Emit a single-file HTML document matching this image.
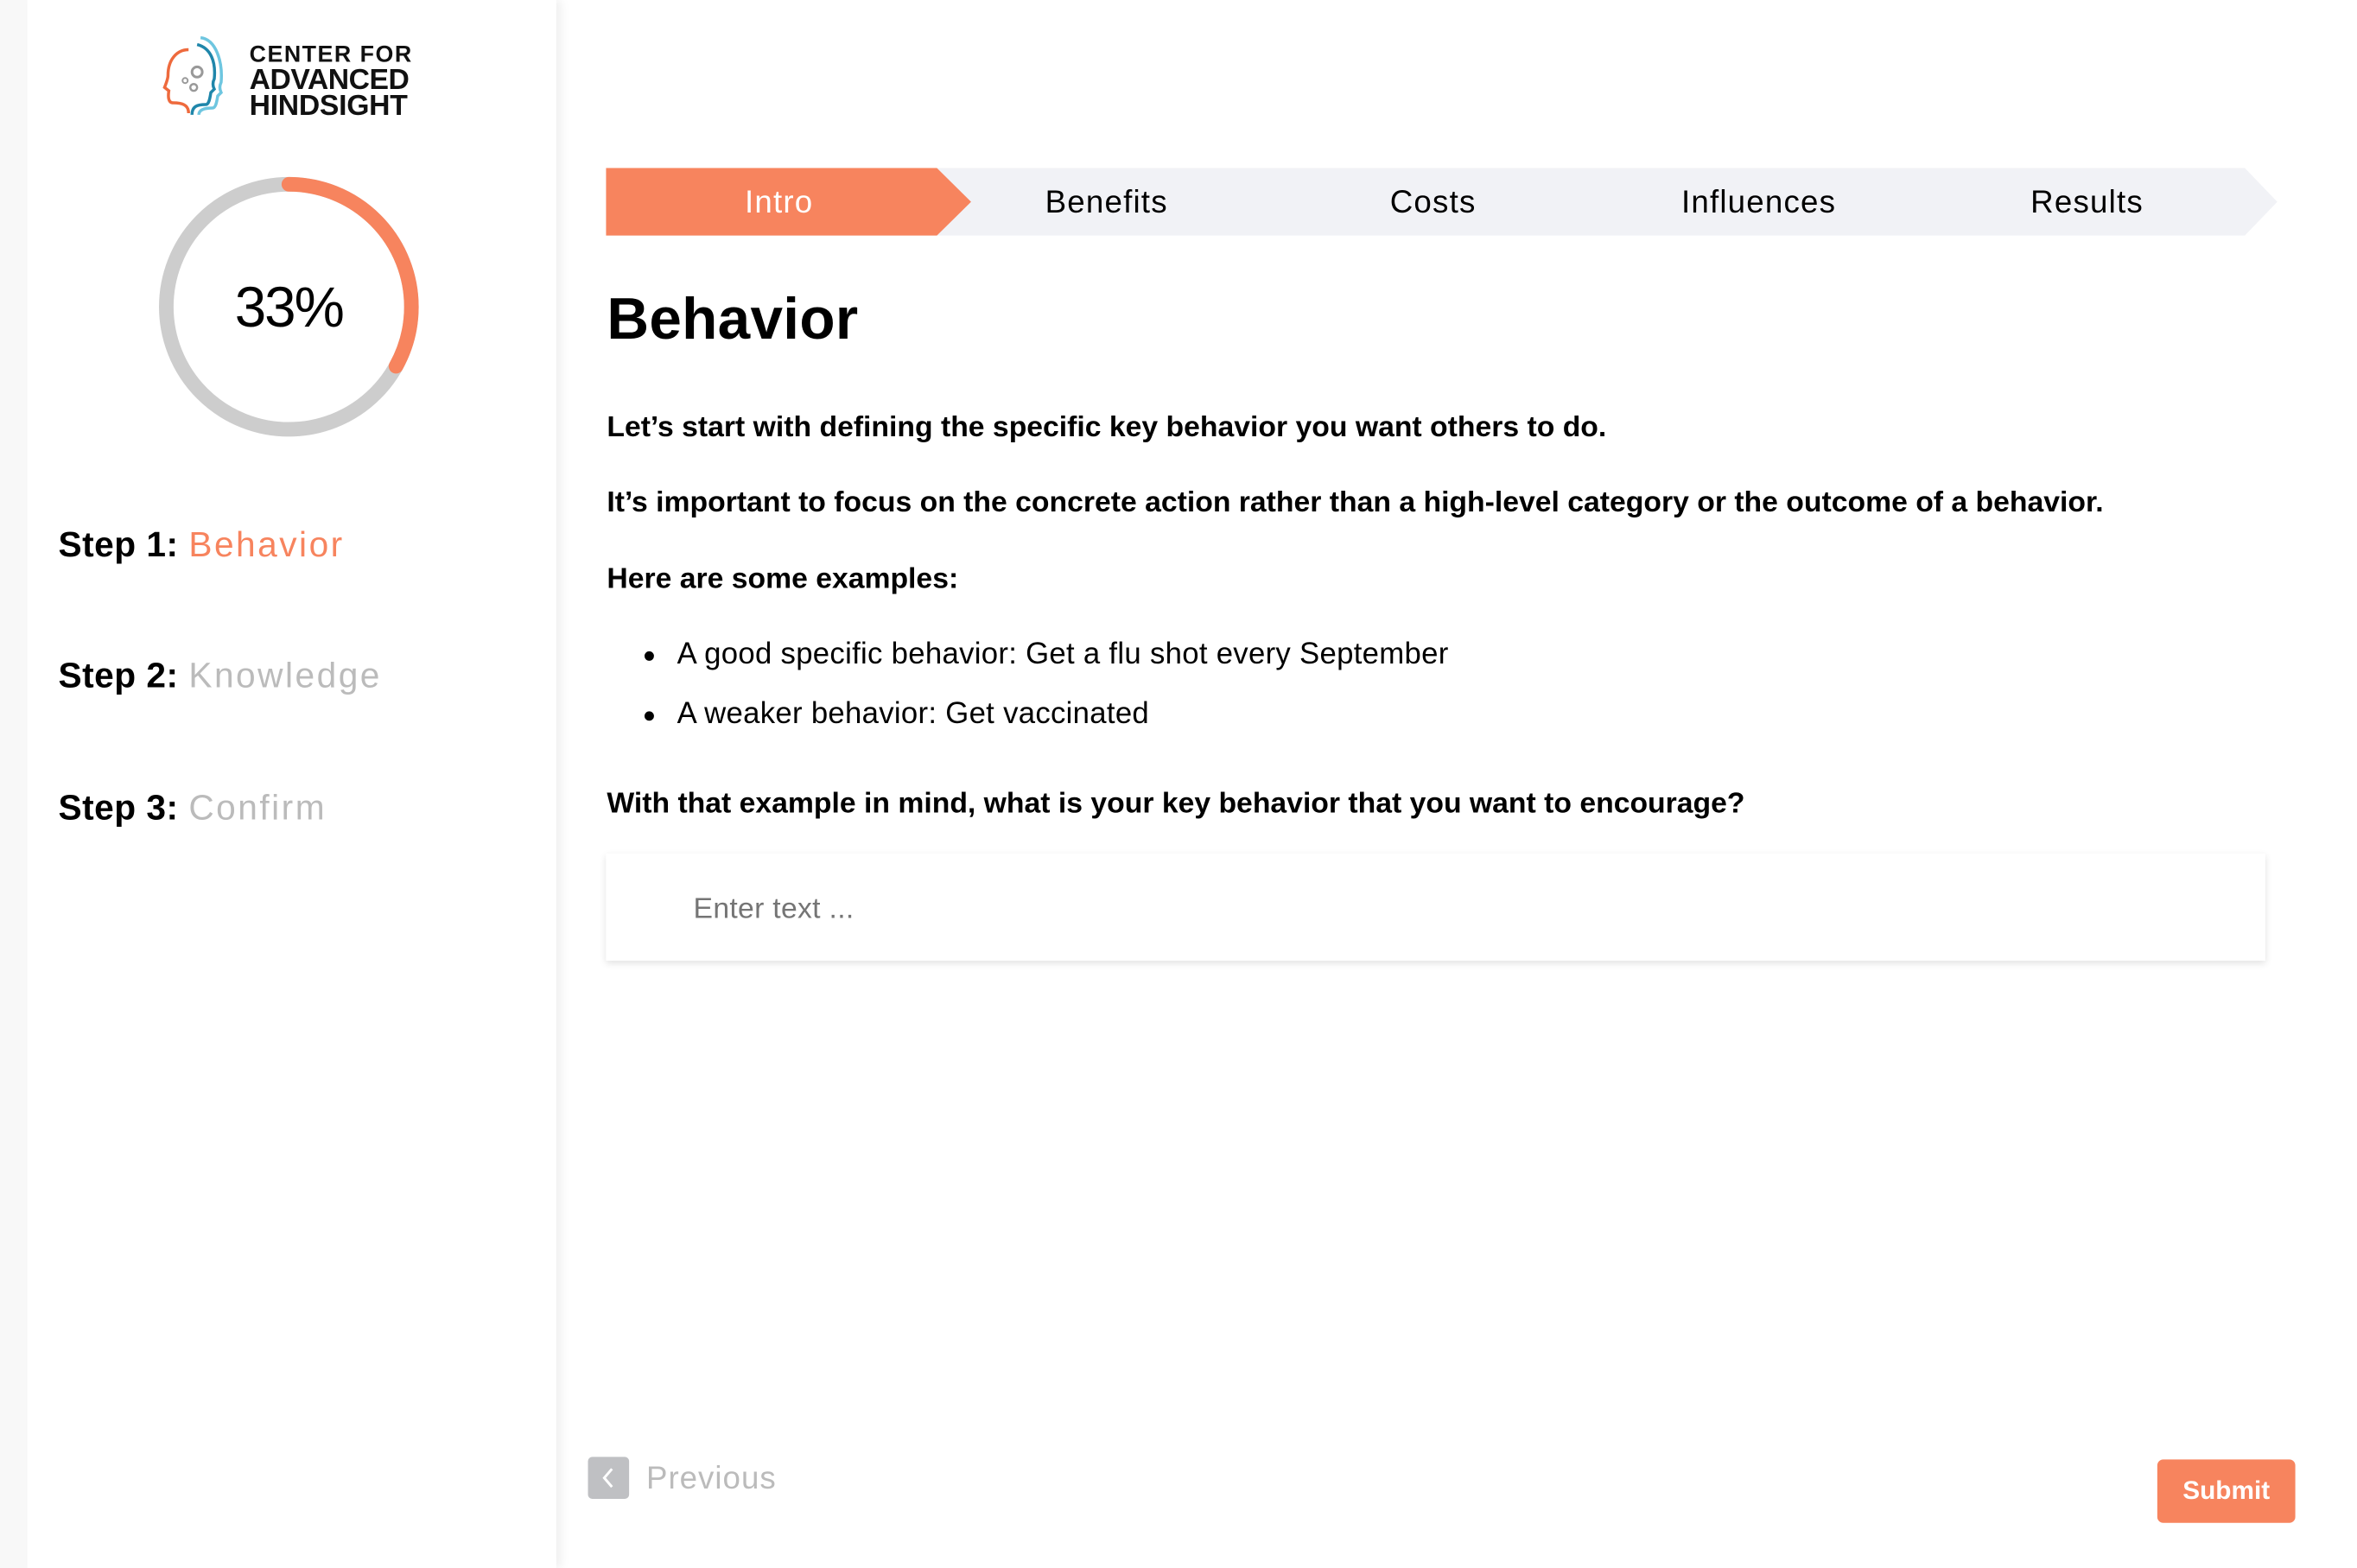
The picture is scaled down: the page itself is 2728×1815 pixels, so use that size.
<!DOCTYPE html>
<html><head><meta charset="utf-8"><style>
*{margin:0;padding:0;box-sizing:border-box}
body{width:2728px;height:1814px;background:#fff;position:relative;overflow:hidden;font-family:"Liberation Sans",sans-serif;color:#000}
#w{position:absolute;left:0;top:0;width:2750px;height:1830px;transform:scale(0.992);transform-origin:0 0}
.leftbg{position:absolute;left:0;top:0;width:32px;height:1830px;background:#f8f8f8}
.side{position:absolute;left:32px;top:0;width:617px;height:1830px;background:#fff;box-shadow:6px 0 10px rgba(0,0,0,0.06)}
.abs{position:absolute}
.logo-t{position:absolute;left:291px;font-weight:bold;color:#111;white-space:nowrap}
.step{position:absolute;left:68px;font-size:41px;font-weight:bold;white-space:nowrap;letter-spacing:0.5px}
.step span{font-weight:normal;letter-spacing:2.5px}
.tab{position:absolute;top:196px;height:79px;line-height:79px;font-size:37px;text-align:center;width:300px;margin-left:-150px;letter-spacing:1.2px}
p.b{position:absolute;left:708px;font-size:34px;font-weight:bold;white-space:nowrap;letter-spacing:0px}
.li{position:absolute;left:790px;font-size:35px;white-space:nowrap;letter-spacing:0.3px}
.dot{position:absolute;left:752px;width:11px;height:11px;border-radius:50%;background:#000}
</style></head><body><div id="w">
<div class="leftbg"></div>
<div class="side"></div>
<svg class="abs" style="left:190px;top:42px" width="90" height="95" viewBox="0 0 90 95">
<path d="M30 90 C30 80 22 78 12 78 C6 78 6 70 7 64 L2 60 C4 55 6 50 6 46 C6 28 16 16 30 16" fill="none" stroke="#ee6a3d" stroke-width="3.5"/>
<path d="M34 92 C34 82 40 80 50 80 C54 80 55 72 56 66 L60 62 C58 58 58 54 60 50 C62 30 56 14 40 10" fill="none" stroke="#1f86aa" stroke-width="3.5"/>
<path d="M42 92 C42 86 48 84 58 84 C62 84 63 76 64 70 L68 66 C66 62 66 58 68 54 C70 30 62 4 44 2" fill="none" stroke="#6ec6e0" stroke-width="3.5"/>
<circle cx="40" cy="42" r="6" fill="none" stroke="#999" stroke-width="3"/>
<circle cx="26" cy="52" r="3" fill="none" stroke="#999" stroke-width="2"/>
<circle cx="36" cy="60" r="4" fill="none" stroke="#999" stroke-width="2.5"/>
</svg>
<div class="logo-t" style="top:48px;font-size:27px;letter-spacing:1.5px">CENTER FOR</div>
<div class="logo-t" style="top:74px;font-size:34px;letter-spacing:-0.5px">ADVANCED</div>
<div class="logo-t" style="top:104px;font-size:34px;letter-spacing:-0.3px">HINDSIGHT</div>
<svg class="abs" style="left:177px;top:198px" width="320" height="320" viewBox="0 0 320 320">
<circle cx="160" cy="160" r="143" fill="none" stroke="#cdcdcd" stroke-width="17"/>
<circle cx="160" cy="160" r="143" fill="none" stroke="#f7845e" stroke-width="17" stroke-linecap="round" stroke-dasharray="297 900" transform="rotate(-90 160 160)"/>
</svg>
<div class="abs" style="left:177px;top:320px;width:320px;text-align:center;font-size:66px;font-weight:300;letter-spacing:-2px">33%</div>
<div class="step" style="top:612px">Step 1: <span style="color:#f7845e">Behavior</span></div>
<div class="step" style="top:765px">Step 2: <span style="color:#bbb">Knowledge</span></div>
<div class="step" style="top:919px">Step 3: <span style="color:#bbb">Confirm</span></div>
<svg class="abs" style="left:707px;top:196px" width="1952" height="79">
<polygon points="0,0 1912,0 1950,39.5 1912,79 0,79" fill="#f1f2f6"/>
<polygon points="0,0 386,0 426,39.5 386,79 0,79" fill="#f7845e"/>
</svg>
<div class="tab" style="left:909px;color:#fff">Intro</div>
<div class="tab" style="left:1291px">Benefits</div>
<div class="tab" style="left:1672px">Costs</div>
<div class="tab" style="left:2052px">Influences</div>
<div class="tab" style="left:2435px">Results</div>
<div class="abs" style="left:708px;top:333px;font-size:68px;font-weight:bold;letter-spacing:0.3px">Behavior</div>
<p class="b" style="top:479px">Let’s start with defining the specific key behavior you want others to do.</p>
<p class="b" style="top:567px">It’s important to focus on the concrete action rather than a high-level category or the outcome of a behavior.</p>
<p class="b" style="top:656px">Here are some examples:</p>
<div class="dot" style="top:760px"></div>
<div class="li" style="top:743px">A good specific behavior: Get a flu shot every September</div>
<div class="dot" style="top:830px"></div>
<div class="li" style="top:813px">A weaker behavior: Get vaccinated</div>
<p class="b" style="top:918px">With that example in mind, what is your key behavior that you want to encourage?</p>
<div class="abs" style="left:707px;top:996px;width:1936px;height:125px;background:#fff;box-shadow:0 3px 8px rgba(0,0,0,0.12);"></div>
<div class="abs" style="left:809px;top:1041px;font-size:34px;color:#757575;letter-spacing:0.3px">Enter text ...</div>
<div class="abs" style="left:686px;top:1700px;width:48px;height:49px;background:#bfc0c3;border-radius:5px"></div>
<svg class="abs" style="left:686px;top:1700px" width="48" height="49"><path d="M28 14 L19 24.5 L28 35" fill="none" stroke="#fff" stroke-width="3"/></svg>
<div class="abs" style="left:754px;top:1704px;font-size:37px;color:#bbb;letter-spacing:1px">Previous</div>
<div class="abs" style="left:2517px;top:1703px;width:161px;height:74px;background:#f7845e;border-radius:7px;color:#fff;font-size:30px;font-weight:bold;text-align:center;line-height:74px">Submit</div>
</div></body></html>
